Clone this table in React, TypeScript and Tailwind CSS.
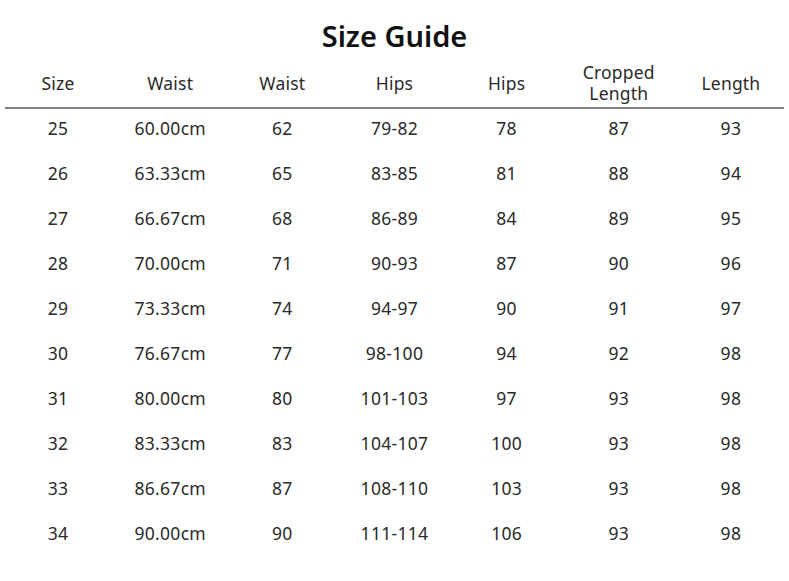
import React from "react";

const rows = [
  ["25", "60.00cm", "62", "79-82", "78", "87", "93"],
  ["26", "63.33cm", "65", "83-85", "81", "88", "94"],
  ["27", "66.67cm", "68", "86-89", "84", "89", "95"],
  ["28", "70.00cm", "71", "90-93", "87", "90", "96"],
  ["29", "73.33cm", "74", "94-97", "90", "91", "97"],
  ["30", "76.67cm", "77", "98-100", "94", "92", "98"],
  ["31", "80.00cm", "80", "101-103", "97", "93", "98"],
  ["32", "83.33cm", "83", "104-107", "100", "93", "98"],
  ["33", "86.67cm", "87", "108-110", "103", "93", "98"],
  ["34", "90.00cm", "90", "111-114", "106", "93", "98"],
];

const headers = ["Size", "Waist", "Waist", "Hips", "Hips", "Cropped\nLength", "Length"];

export default function App() {
  return (
    <div
      className="w-[789px] h-[581px] bg-white text-[#2a2a2a] overflow-hidden"
      style={{ fontFamily: '"Noto Sans", "Open Sans", sans-serif' }}
    >
      <div className="pt-[17px] text-center text-[29px] leading-[38px] font-semibold text-[#111]">
        Size Guide
      </div>
      <div className="px-[2px]">
        <div className="grid grid-cols-7 h-[52px] pt-[4px] items-center text-[17.5px] leading-[21px] tracking-[0.2px]">
          {headers.map((h, i) => (
            <div key={i} className="text-center whitespace-pre-line">
              {h}
            </div>
          ))}
        </div>
      </div>
      <div className="mx-[5px] h-[2px] bg-[#808080]" />
      <div className="px-[2px] -mt-[3px]">
        {rows.map((r, ri) => (
          <div key={ri} className="grid grid-cols-7 h-[45px] items-center text-[17.5px] tracking-[0.3px]">
            {r.map((c, ci) => (
              <div key={ci} className="text-center">
                {c}
              </div>
            ))}
          </div>
        ))}
      </div>
    </div>
  );
}
